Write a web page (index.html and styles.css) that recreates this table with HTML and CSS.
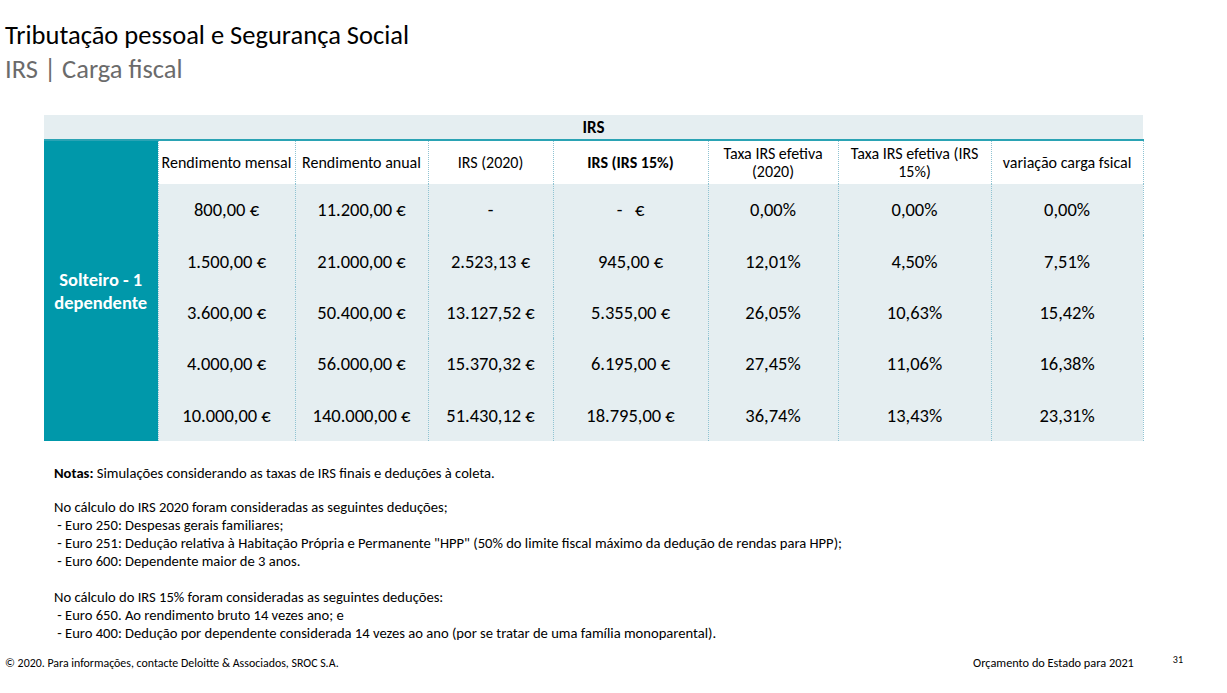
FILE: index.html
```html
<!DOCTYPE html>
<html lang="pt">
<head>
<meta charset="utf-8">
<title>IRS | Carga fiscal</title>
<link rel="stylesheet" href="styles.css">
</head>
<body>
<div class="slide">
  <header class="head">
    <h1 class="title">Tributação pessoal e Segurança Social</h1>
    <h2 class="subtitle">IRS | Carga fiscal</h2>
  </header>

  <table class="irs">
    <colgroup>
      <col class="w0"><col class="w1"><col class="w2"><col class="w3"><col class="w4"><col class="w5"><col class="w6"><col class="w7">
    </colgroup>
    <thead>
      <tr class="top-row"><th colspan="8">IRS</th></tr>
    </thead>
    <tbody>
      <tr class="col-head">
        <td class="label" rowspan="6">Solteiro - 1<br>dependente</td>
        <th>Rendimento mensal</th>
        <th>Rendimento anual</th>
        <th>IRS (2020)</th>
        <th class="bold">IRS (IRS 15%)</th>
        <th>Taxa IRS efetiva<br>(2020)</th>
        <th>Taxa IRS efetiva (IRS<br>15%)</th>
        <th>variação carga fsical</th>
      </tr>
      <tr><td>800,00 €</td><td>11.200,00 €</td><td>-</td><td>-&nbsp;&nbsp;&nbsp;€</td><td>0,00%</td><td>0,00%</td><td>0,00%</td></tr>
      <tr><td>1.500,00 €</td><td>21.000,00 €</td><td>2.523,13 €</td><td>945,00 €</td><td>12,01%</td><td>4,50%</td><td>7,51%</td></tr>
      <tr><td>3.600,00 €</td><td>50.400,00 €</td><td>13.127,52 €</td><td>5.355,00 €</td><td>26,05%</td><td>10,63%</td><td>15,42%</td></tr>
      <tr><td>4.000,00 €</td><td>56.000,00 €</td><td>15.370,32 €</td><td>6.195,00 €</td><td>27,45%</td><td>11,06%</td><td>16,38%</td></tr>
      <tr><td>10.000,00 €</td><td>140.000,00 €</td><td>51.430,12 €</td><td>18.795,00 €</td><td>36,74%</td><td>13,43%</td><td>23,31%</td></tr>
    </tbody>
  </table>

  <div class="notes">
    <p class="first"><strong>Notas:</strong> Simulações considerando as taxas de IRS finais e deduções à coleta.</p>
    <p>No cálculo do IRS 2020 foram consideradas as seguintes deduções;<br>
    &nbsp;- Euro 250: Despesas gerais familiares;<br>
    &nbsp;- Euro 251: Dedução relativa à Habitação Própria e Permanente "HPP" (50% do limite fiscal máximo da dedução de rendas para HPP);<br>
    &nbsp;- Euro 600: Dependente maior de 3 anos.</p>
    <p>No cálculo do IRS 15% foram consideradas as seguintes deduções:<br>
    &nbsp;- Euro 650. Ao rendimento bruto 14 vezes ano; e<br>
    &nbsp;- Euro 400: Dedução por dependente considerada 14 vezes ao ano (por se tratar de uma família monoparental).</p>
  </div>

  <footer class="foot">
    <span class="copy">© 2020. Para informações, contacte Deloitte &amp; Associados, SROC S.A.</span>
    <span class="right">
      <span class="doc">Orçamento do Estado para 2021</span>
      <span class="page">31</span>
    </span>
  </footer>
</div>
</body>
</html>
```

FILE: styles.css
```css
* { box-sizing: border-box; }
html, body {
  margin: 0;
  padding: 0;
  background: #ffffff;
}
body {
  font-family: Carlito, Lato, "Liberation Sans", sans-serif;
  color: #000;
}
.slide {
  width: 1227px;
  height: 693px;
  position: relative;
  overflow: hidden;
}
.head {
  padding: 18px 0 0 5px;
}
.title {
  margin: 0;
  font-weight: 400;
  font-size: 26.5px;
  line-height: 34px;
  color: #000;
}
.subtitle {
  margin: 0;
  font-weight: 400;
  font-size: 26.5px;
  line-height: 34px;
  color: #6b6b6b;
}

.irs {
  margin: 29px 0 0 44px;
  width: 1099px;
  border-collapse: collapse;
  table-layout: fixed;
}
.w0 { width: 114px; }
.w1 { width: 137px; }
.w2 { width: 133px; }
.w3 { width: 125px; }
.w4 { width: 155px; }
.w5 { width: 130px; }
.w6 { width: 153px; }
.w7 { width: 152px; }
.irs td, .irs th {
  padding: 0;
  text-align: center;
  vertical-align: middle;
  white-space: nowrap;
}
.top-row th {
  height: 25px;
  background: #e5eef1;
  font-weight: 700;
  font-size: 17px;
  border-bottom: 2px solid #2aa3b4;
}
.col-head th {
  height: 44px;
  background: #fff;
  font-weight: 400;
  font-size: 16px;
  line-height: 18px;
  border-left: 1px dotted #8fc3d2;
}
.col-head th.bold { font-weight: 700; }
.col-head th:last-child { border-right: 1px dotted #8fc3d2; }
.label {
  background: #0098aa;
  color: #fff;
  font-weight: 700;
  font-size: 18.5px;
  line-height: 23px;
}
.irs tbody tr + tr td {
  height: 51.4px;
  background: #e5eef1;
  font-size: 18.5px;
  border-left: 1px dotted #8fc3d2;
}
.irs tbody tr + tr td:last-child { border-right: 1px dotted #8fc3d2; }

.notes {
  margin: 23px 0 0 54px;
  font-size: 14.6px;
  line-height: 18px;
}
.notes p { margin: 0 0 18px 0; }
.notes p.first { margin-bottom: 16px; }

.foot {
  position: absolute;
  left: 0;
  right: 0;
  top: 655px;
  display: flex;
  justify-content: space-between;
  align-items: flex-start;
  padding: 0 0 0 5px;
  font-size: 11.9px;
}
.copy { line-height: 16px; }
.right { display: flex; align-items: flex-start; }
.doc { line-height: 16px; margin-right: 39px; font-size: 12.3px; }
.page { font-size: 10px; line-height: 10px; margin-right: 44px; }
```
